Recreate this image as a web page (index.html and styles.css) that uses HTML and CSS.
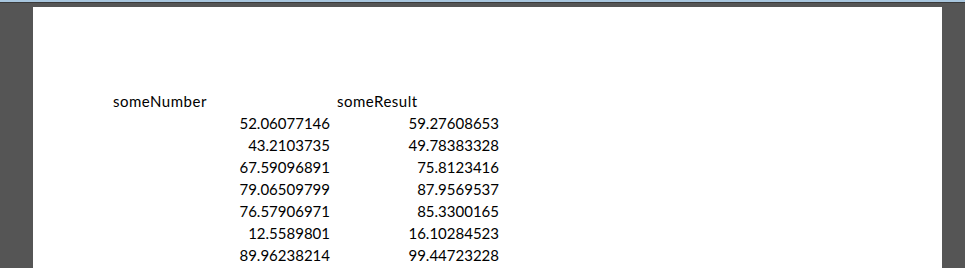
FILE: index.html
```html
<!DOCTYPE html>
<html>
<head>
<meta charset="utf-8">
<link rel="stylesheet" href="styles.css">
</head>
<body>
<div class="topbar"></div>
<div class="page">
  <div class="sheet">
    <div class="cell left">someNumber</div><div class="cell left second">someResult</div>
    <div class="cell">52.06077146</div><div class="cell">59.27608653</div>
    <div class="cell">43.2103735</div><div class="cell">49.78383328</div>
    <div class="cell">67.59096891</div><div class="cell">75.8123416</div>
    <div class="cell">79.06509799</div><div class="cell">87.9569537</div>
    <div class="cell">76.57906971</div><div class="cell">85.3300165</div>
    <div class="cell">12.5589801</div><div class="cell">16.10284523</div>
    <div class="cell">89.96238214</div><div class="cell">99.44723228</div>
  </div>
</div>
</body>
</html>
```
FILE: styles.css
```css
html, body {
  margin: 0;
  padding: 0;
  height: 100%;
  overflow: hidden;
}
body {
  background: #555555;
}
.topbar {
  height: 2px;
  background: #a8c6de;
  border-bottom: 1px solid #3a3a3a;
}
.page {
  margin: 4px 0 0 33px;
  width: 909px;
  height: calc(100% - 7px);
  background: #ffffff;
  padding-top: 83px;
  box-sizing: border-box;
  overflow: hidden;
}
.sheet {
  margin-left: 78px;
  display: grid;
  grid-template-columns: 222px 169px;
  grid-auto-rows: 22px;
  font-family: Lato, "Open Sans", sans-serif;
  font-size: 15px;
  color: #000;
}
.cell {
  text-align: right;
  padding: 0 3px 0 2px;
  line-height: 22px;
  white-space: nowrap;
}
.cell.left {
  text-align: left;
  letter-spacing: 0.5px;
}
.cell.second {
  padding-left: 4px;
}
```
